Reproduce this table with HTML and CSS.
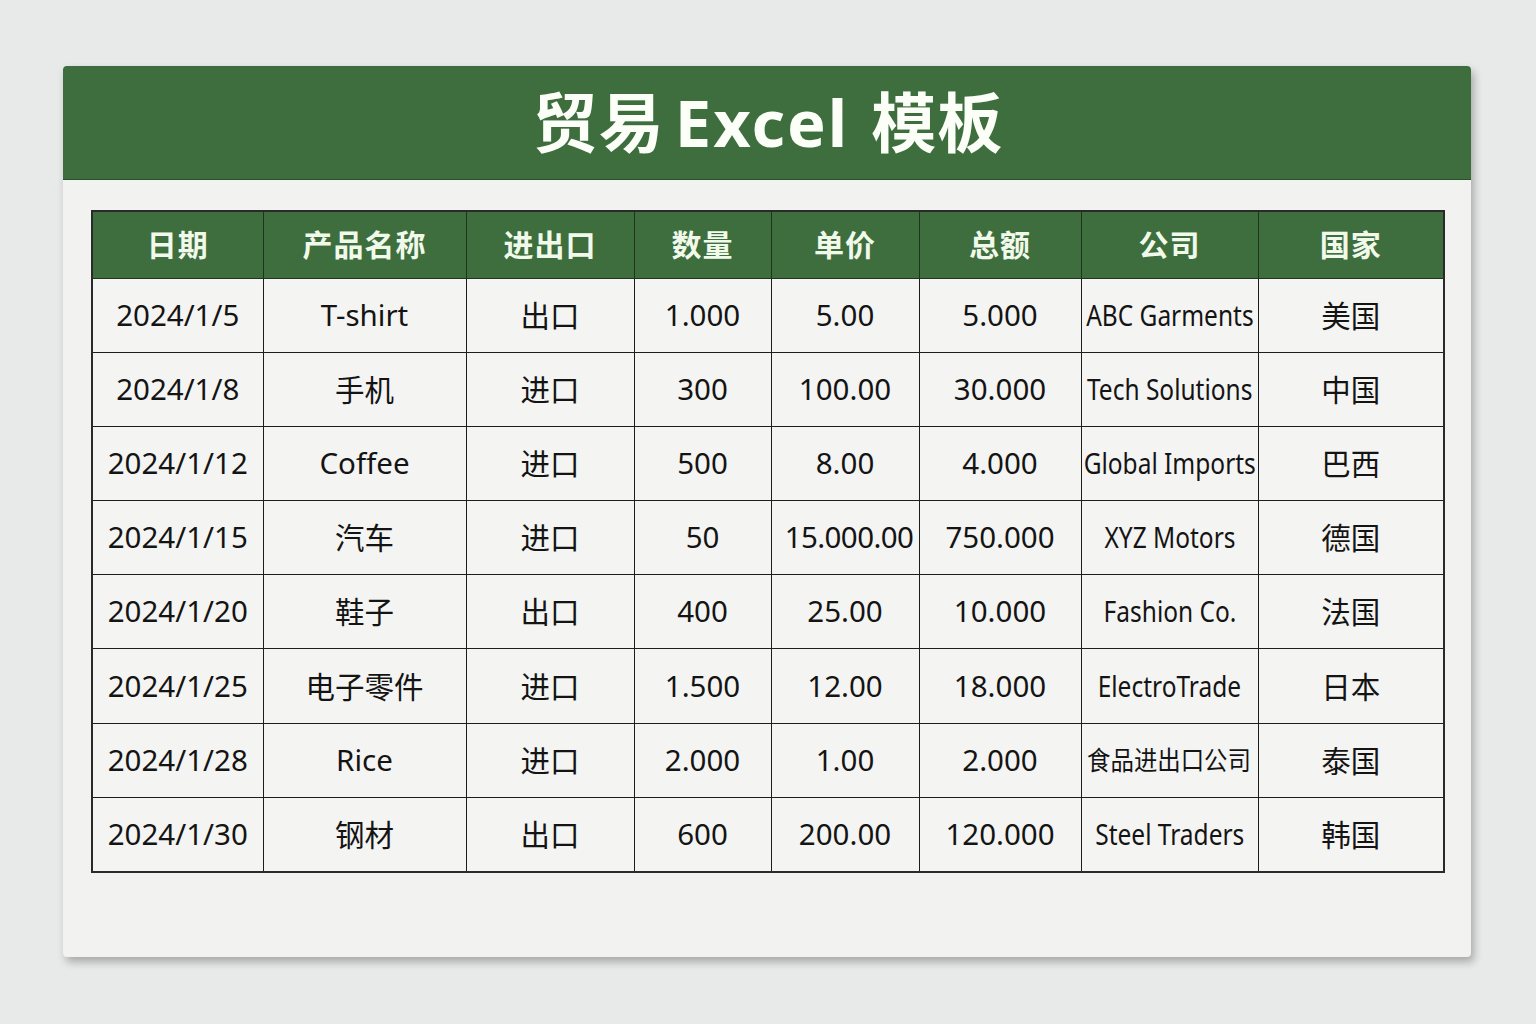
FILE: index.html
```html
<!DOCTYPE html>
<html lang="zh-CN">
<head>
<meta charset="utf-8">
<title>贸易Excel 模板</title>
<link rel="stylesheet" href="styles.css">
</head>
<body>
<div class="card">
  <header class="banner"><h1>贸易<span class="latin">Excel</span> 模板</h1></header>
  <div class="content">
    <table class="sheet">
      <colgroup>
        <col class="c1"><col class="c2"><col class="c3"><col class="c4">
        <col class="c5"><col class="c6"><col class="c7"><col class="c8">
      </colgroup>
      <thead>
        <tr><th>日期</th><th>产品名称</th><th>进出口</th><th>数量</th><th>单价</th><th>总额</th><th>公司</th><th>国家</th></tr>
      </thead>
      <tbody>
        <tr><td>2024/1/5</td><td>T-shirt</td><td>出口</td><td>1.000</td><td>5.00</td><td>5.000</td><td class="co"><span>ABC Garments</span></td><td>美国</td></tr>
        <tr><td>2024/1/8</td><td>手机</td><td>进口</td><td>300</td><td>100.00</td><td>30.000</td><td class="co"><span>Tech Solutions</span></td><td>中国</td></tr>
        <tr><td>2024/1/12</td><td>Coffee</td><td>进口</td><td>500</td><td>8.00</td><td>4.000</td><td class="co"><span>Global Imports</span></td><td>巴西</td></tr>
        <tr><td>2024/1/15</td><td>汽车</td><td>进口</td><td>50</td><td class="tight">15.000.00</td><td>750.000</td><td class="co"><span>XYZ Motors</span></td><td>德国</td></tr>
        <tr><td>2024/1/20</td><td>鞋子</td><td>出口</td><td>400</td><td>25.00</td><td>10.000</td><td class="co"><span>Fashion Co.</span></td><td>法国</td></tr>
        <tr><td>2024/1/25</td><td>电子零件</td><td>进口</td><td>1.500</td><td>12.00</td><td>18.000</td><td class="co"><span>ElectroTrade</span></td><td>日本</td></tr>
        <tr><td>2024/1/28</td><td>Rice</td><td>进口</td><td>2.000</td><td>1.00</td><td>2.000</td><td class="co cjk"><span>食品进出口公司</span></td><td>泰国</td></tr>
        <tr><td>2024/1/30</td><td>钢材</td><td>出口</td><td>600</td><td>200.00</td><td>120.000</td><td class="co"><span>Steel Traders</span></td><td>韩国</td></tr>
      </tbody>
    </table>
  </div>
</div>
</body>
</html>
```

FILE: styles.css
```css
html, body {
  margin: 0;
  padding: 0;
}
body {
  background: #e8e9e9;
  font-family: "Noto Sans", "Noto Sans CJK SC", sans-serif;
  color: #141414;
  padding: 66px 0 0 63px;
  height: 1024px;
  box-sizing: border-box;
}
.card {
  width: 1408px;
  height: 891px;
  background: #f2f2f1;
  border-radius: 4px;
  box-shadow: 3px 5px 8px rgba(0, 0, 0, 0.28);
  overflow: hidden;
}
.banner {
  height: 114px;
  background: #3e6e3e;
  border-bottom: 1px solid #2b4f2b;
  box-sizing: border-box;
  display: flex;
  align-items: center;
  justify-content: center;
}
.banner h1 {
  margin: 0;
  padding-left: 2px;
  color: #fbfff7;
  font-family: "Noto Sans", "Noto Sans CJK SC", sans-serif;
  font-weight: 700;
  font-size: 65px;
  line-height: 1;
  letter-spacing: 1px;
  word-spacing: 4px;
}
.banner .latin {
  margin-left: 10px;
  letter-spacing: 2px;
}
.content {
  padding: 30px 0 0 28px;
}
.sheet {
  border-collapse: collapse;
  table-layout: fixed;
  width: 1352px;
  border: 2px solid #2a2a2a;
}
.c1 { width: 171px; }
.c2 { width: 203px; }
.c3 { width: 168px; }
.c4 { width: 137px; }
.c5 { width: 148px; }
.c6 { width: 162px; }
.c7 { width: 177px; }
.c8 { width: 186px; }
.sheet th {
  height: 67px;
  background: #3e6e3e;
  color: #f1faea;
  font-weight: 700;
  font-size: 30px;
  font-family: "Noto Sans CJK SC", sans-serif;
  border: 1.5px solid #1f331f;
  padding: 0 0 4px;
  box-sizing: border-box;
  letter-spacing: 1px;
}
.sheet td {
  height: 74.2px;
  background: #f4f4f3;
  border: 1.5px solid #1d1d1d;
  text-align: center;
  font-size: 29.5px;
  padding: 0 0 2px;
  white-space: nowrap;
  overflow: visible;
  box-sizing: border-box;
}
.sheet td.tight {
  letter-spacing: -0.6px;
  padding-left: 8px;
}
.sheet td.co {
  overflow: hidden;
  font-size: 29.5px;
}
.sheet td.co span {
  display: inline-block;
  transform: scaleX(0.83);
  transform-origin: center;
  margin: 0 -30px;
}
.sheet td.cjk {
  font-size: 26px;
}
.sheet td.cjk span {
  transform: scaleX(0.9);
}
```
